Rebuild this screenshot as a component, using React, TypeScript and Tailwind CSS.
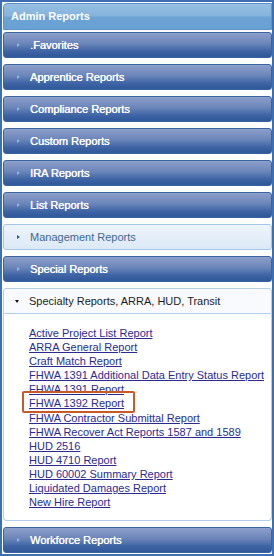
import React from "react";

const headers = [
  ".Favorites",
  "Apprentice Reports",
  "Compliance Reports",
  "Custom Reports",
  "IRA Reports",
  "List Reports",
];

const links = [
  "Active Project List Report",
  "ARRA General Report",
  "Craft Match Report",
  "FHWA 1391 Additional Data Entry Status Report",
  "FHWA 1391 Report",
  "FHWA 1392 Report",
  "FHWA Contractor Submittal Report",
  "FHWA Recover Act Reports 1587 and 1589",
  "HUD 2516",
  "HUD 4710 Report",
  "HUD 60002 Summary Report",
  "Liquidated Damages Report",
  "New Hire Report",
];

function DarkHeader({ label }: { label: string }) {
  return (
    <div className="flex h-[26px] items-center rounded-[3px] border border-[#3a64a3] bg-[linear-gradient(#8e9fca,#6a85b9_45%,#3f65a5_75%,#2f5899)] pl-[13px] text-white [text-shadow:0.35px_0_0_#fff]">
      <span className="mr-[10px] h-0 w-0 border-y-[2.5px] border-l-[3px] border-y-transparent border-l-[#8fb6df]" />
      <span>{label}</span>
    </div>
  );
}

export default function App() {
  return (
    <div
      className="box-border flex h-[556px] w-[274px] flex-col border-2 border-[#3e6fb0] bg-white pl-px pt-px text-[11px] leading-none"
      style={{ fontFamily: '"Liberation Sans", Arial, sans-serif' }}
    >
      <div className="flex h-[27px] items-center rounded-tl-[4px] border border-[#5b93cb] bg-[linear-gradient(#95bfe3,#86b3dc_48%,#6ca3d5_52%,#6aa1d4)] pl-[7px] font-bold text-white">
        Admin Reports
      </div>

      <div className="mt-[2px] flex flex-col gap-[6px]">
        {headers.map((h) => (
          <DarkHeader key={h} label={h} />
        ))}

        <div className="flex h-[26px] items-center rounded-[3px] border border-[#a3c5e7] bg-[linear-gradient(#edf4fb,#dce9f6)] pl-[13px] text-[#3f6890]">
          <span className="mr-[10px] h-0 w-0 border-y-[2.5px] border-l-[3px] border-y-transparent border-l-[#2a5c9a]" />
          <span>Management Reports</span>
        </div>

        <DarkHeader label="Special Reports" />

        <div className="flex flex-col">
          <div className="flex h-[26px] items-center rounded-t-[3px] border border-[#b4cde8] bg-[#f8fafd] pl-[11px] text-[#1c1c1c]">
            <span className="mr-[10px] h-0 w-0 border-x-[2.5px] border-t-[3px] border-x-transparent border-t-[#111]" />
            <span>Specialty Reports, ARRA, HUD, Transit</span>
          </div>
          <div className="flex h-[207px] flex-col rounded-b-[4px] border-x border-b border-[#b4cde8] bg-white pl-[25px] pt-[12px]">
            {links.map((l) => (
              <div key={l} className="relative h-[14.1px] leading-[14.1px]">
                <a className="text-[#2b2b8e] underline underline-offset-[1px]">{l}</a>
                {l === "FHWA 1392 Report" && (
                  <span className="absolute left-[-7px] top-[-5px] h-[22px] w-[113px] rounded-[2px] border-2 border-[#c65b28]" />
                )}
              </div>
            ))}
          </div>
        </div>

        <DarkHeader label="Workforce Reports" />
      </div>
    </div>
  );
}
